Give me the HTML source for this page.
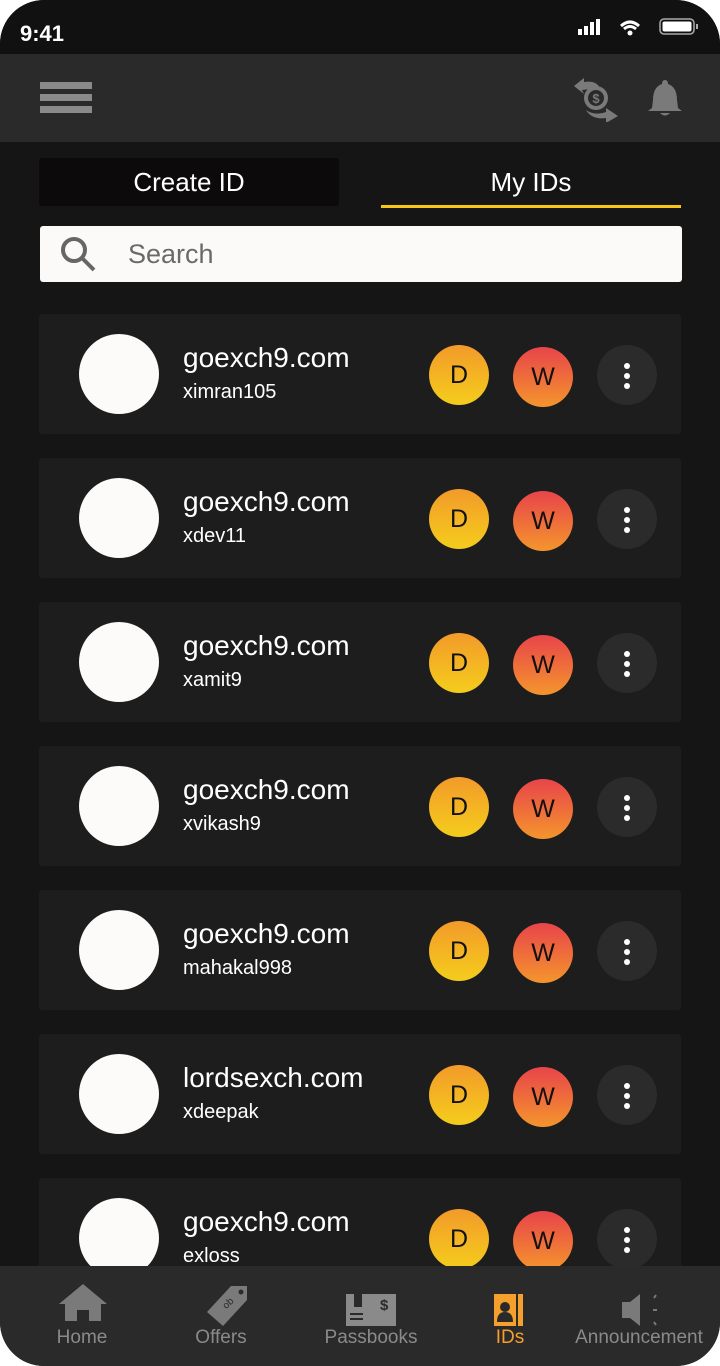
<!DOCTYPE html>
<html><head><meta charset="utf-8"><style>
*{margin:0;padding:0;box-sizing:border-box}
html,body{width:720px;height:1366px;background:#fff;overflow:hidden}
body{font-family:"Liberation Sans",sans-serif}
.phone{position:absolute;left:0;top:0;width:720px;height:1366px;background:#151515;border-radius:44px;overflow:hidden}
.status{position:absolute;left:0;top:0;width:720px;height:54px;background:#111}
.time{position:absolute;left:20px;top:21px;color:#fff;font-size:22px;font-weight:bold}
.hdr{position:absolute;left:0;top:54px;width:720px;height:88px;background:#2a2a2a}
.tab1{position:absolute;left:39px;top:158px;width:300px;height:48px;background:#0c0a0a;border-radius:3px;color:#fff;font-size:26px;text-align:center;line-height:48px}
.tab2{position:absolute;left:381px;top:158px;width:300px;height:50px;color:#fff;font-size:26px;text-align:center;line-height:48px;border-bottom:3px solid #f5c518}
.search{position:absolute;left:40px;top:226px;width:642px;height:56px;background:#fbfaf8;border-radius:3px}
.search span{position:absolute;left:88px;top:13px;font-size:27px;color:#6a6a6a}
.card{position:absolute;left:39px;width:642px;height:120px;background:#1d1d1d;border-radius:3px}
.av{position:absolute;left:40px;top:20px;width:80px;height:80px;border-radius:50%;background:#fcfbf9}
.t1{position:absolute;left:144px;top:28px;color:#fff;font-size:28px}
.t2{position:absolute;left:144px;top:67px;color:#fff;font-size:20px}
.c{position:absolute;top:31px;width:60px;height:60px;border-radius:50%;text-align:center;line-height:60px;font-size:25px;color:#111}
.d{left:390px;background:linear-gradient(#f39a2a,#f4cd1c)}
.w{left:474px;top:33px;background:linear-gradient(#e8444a,#f4952c)}
.m{left:558px;background:#2b2b2b}
.dot{position:absolute;left:27px;width:6px;height:6px;border-radius:50%;background:#fff}
.nav{position:absolute;left:0;top:1266px;width:720px;height:100px;background:#2a2a2a}
.ni{position:absolute;top:61px;font-size:19px;color:#8a8a8a;text-align:center;width:160px}
</style></head><body>
<div class="phone">
<div class="status"><div class="time">9:41</div>
<svg style="position:absolute;left:578px;top:18px" width="130" height="20">
<rect x="0" y="11" width="4" height="6" fill="#fff"/><rect x="6" y="8" width="4" height="9" fill="#fff"/><rect x="12" y="4" width="4" height="13" fill="#fff"/><rect x="18" y="1" width="4" height="16" fill="#fff"/>
<path d="M43 8 Q52 0 61 8" stroke="#fff" stroke-width="3" fill="none"/><path d="M46 11 Q52 6 58 11" stroke="#fff" stroke-width="3" fill="none"/><circle cx="52" cy="15" r="2.5" fill="#fff"/>
<rect x="82" y="1" width="34" height="15" rx="4" fill="none" stroke="#aaa" stroke-width="1.5"/><rect x="84.5" y="3.5" width="29" height="10" rx="2" fill="#fff"/><rect x="118" y="6" width="2" height="5" fill="#aaa"/>
</svg></div>
<div class="hdr">
<div style="position:absolute;left:40px;top:28px;width:52px;height:7px;background:#8a8a8a"></div>
<div style="position:absolute;left:40px;top:40px;width:52px;height:7px;background:#8a8a8a"></div>
<div style="position:absolute;left:40px;top:52px;width:52px;height:7px;background:#8a8a8a"></div>
<svg style="position:absolute;left:572px;top:22px" width="50" height="46"><path d="M2 10 L12 2 L12 6 Q24 4 28 12 L10 14 L12 18 Z" fill="#7a7a7a"/><circle cx="24" cy="22" r="12" fill="#7a7a7a"/><circle cx="24" cy="22" r="8" fill="#2a2a2a"/><text x="24" y="27" font-size="13" font-weight="bold" fill="#7a7a7a" text-anchor="middle" font-family="Liberation Sans">$</text><path d="M14 34 Q22 40 34 36 L34 32 L46 40 L34 47 L34 42 Q20 44 14 34 Z" fill="#7a7a7a"/></svg>
<svg style="position:absolute;left:648px;top:24px" width="34" height="40"><path d="M17 2 Q20 2 20 6 Q29 9 29 22 L30 30 L34 33 L0 33 L4 30 L5 22 Q5 9 14 6 Q14 2 17 2 Z" fill="#7a7a7a"/><path d="M12 35 Q17 40 22 35 Z" fill="#7a7a7a"/></svg>
</div>
<div class="tab1">Create ID</div>
<div class="tab2">My IDs</div>
<div class="search"><svg style="position:absolute;left:20px;top:10px" width="38" height="38"><circle cx="14" cy="14" r="11" stroke="#666" stroke-width="4" fill="none"/><path d="M22 22 L34 34" stroke="#666" stroke-width="4"/></svg><span>Search</span></div>

<div class="card" style="top:314px"><div class="av"></div><div class="t1">goexch9.com</div><div class="t2">ximran105</div><div class="c d">D</div><div class="c w">W</div><div class="c m"><div class="dot" style="top:18px"></div><div class="dot" style="top:28px"></div><div class="dot" style="top:38px"></div></div></div>
<div class="card" style="top:458px"><div class="av"></div><div class="t1">goexch9.com</div><div class="t2">xdev11</div><div class="c d">D</div><div class="c w">W</div><div class="c m"><div class="dot" style="top:18px"></div><div class="dot" style="top:28px"></div><div class="dot" style="top:38px"></div></div></div>
<div class="card" style="top:602px"><div class="av"></div><div class="t1">goexch9.com</div><div class="t2">xamit9</div><div class="c d">D</div><div class="c w">W</div><div class="c m"><div class="dot" style="top:18px"></div><div class="dot" style="top:28px"></div><div class="dot" style="top:38px"></div></div></div>
<div class="card" style="top:746px"><div class="av"></div><div class="t1">goexch9.com</div><div class="t2">xvikash9</div><div class="c d">D</div><div class="c w">W</div><div class="c m"><div class="dot" style="top:18px"></div><div class="dot" style="top:28px"></div><div class="dot" style="top:38px"></div></div></div>
<div class="card" style="top:890px"><div class="av"></div><div class="t1">goexch9.com</div><div class="t2">mahakal998</div><div class="c d">D</div><div class="c w">W</div><div class="c m"><div class="dot" style="top:18px"></div><div class="dot" style="top:28px"></div><div class="dot" style="top:38px"></div></div></div>
<div class="card" style="top:1034px"><div class="av"></div><div class="t1">lordsexch.com</div><div class="t2">xdeepak</div><div class="c d">D</div><div class="c w">W</div><div class="c m"><div class="dot" style="top:18px"></div><div class="dot" style="top:28px"></div><div class="dot" style="top:38px"></div></div></div>
<div class="card" style="top:1178px"><div class="av"></div><div class="t1">goexch9.com</div><div class="t2">exloss</div><div class="c d">D</div><div class="c w">W</div><div class="c m"><div class="dot" style="top:18px"></div><div class="dot" style="top:28px"></div><div class="dot" style="top:38px"></div></div></div>

<div class="nav">
<svg style="position:absolute;left:59px;top:16px" width="48" height="40"><path d="M24 2 L48 22 L42 22 L42 39 L30 39 L30 28 L18 28 L18 39 L6 39 L6 22 L0 22 Z" fill="#7a7a7a"/></svg>
<svg style="position:absolute;left:205px;top:18px" width="44" height="42"><path d="M26 2 L42 2 L42 16 L18 42 L2 28 Z" fill="#7a7a7a"/><circle cx="36" cy="8" r="2.5" fill="#2a2a2a"/><text x="20" y="26" font-size="10" fill="#2a2a2a" font-family="Liberation Sans" transform="rotate(-45 20 24)">ob</text></svg>
<svg style="position:absolute;left:346px;top:28px" width="50" height="32"><rect x="0" y="0" width="50" height="32" fill="#8a8a8a"/><rect x="8" y="0" width="8" height="13" fill="#2a2a2a"/><rect x="4" y="19" width="13" height="2" fill="#2a2a2a"/><rect x="4" y="24" width="13" height="2" fill="#2a2a2a"/><text x="34" y="16" font-size="15" font-weight="bold" fill="#2a2a2a" font-family="Liberation Sans">$</text></svg>
<svg style="position:absolute;left:494px;top:28px" width="30" height="32"><rect x="0" y="0" width="22" height="32" fill="#f5a02c"/><rect x="24" y="0" width="5" height="32" fill="#f5a02c"/><circle cx="11" cy="13" r="5" fill="#2a2a2a"/><path d="M3 28 Q3 18 11 18 Q19 18 19 28 Z" fill="#2a2a2a"/></svg>
<svg style="position:absolute;left:622px;top:26px" width="40" height="36"><path d="M0 10 L8 10 L18 2 L18 34 L8 26 L0 26 Z" fill="#7a7a7a"/><path d="M32 6 L34 3 M31 18 L35 18 M32 30 L34 33" stroke="#7a7a7a" stroke-width="2"/></svg>
<div class="ni" style="left:2px">Home</div>
<div class="ni" style="left:141px">Offers</div>
<div class="ni" style="left:291px">Passbooks</div>
<div class="ni" style="left:430px;color:#f5a02c">IDs</div>
<div class="ni" style="left:559px">Announcement</div>
</div>
</div>
</body></html>
